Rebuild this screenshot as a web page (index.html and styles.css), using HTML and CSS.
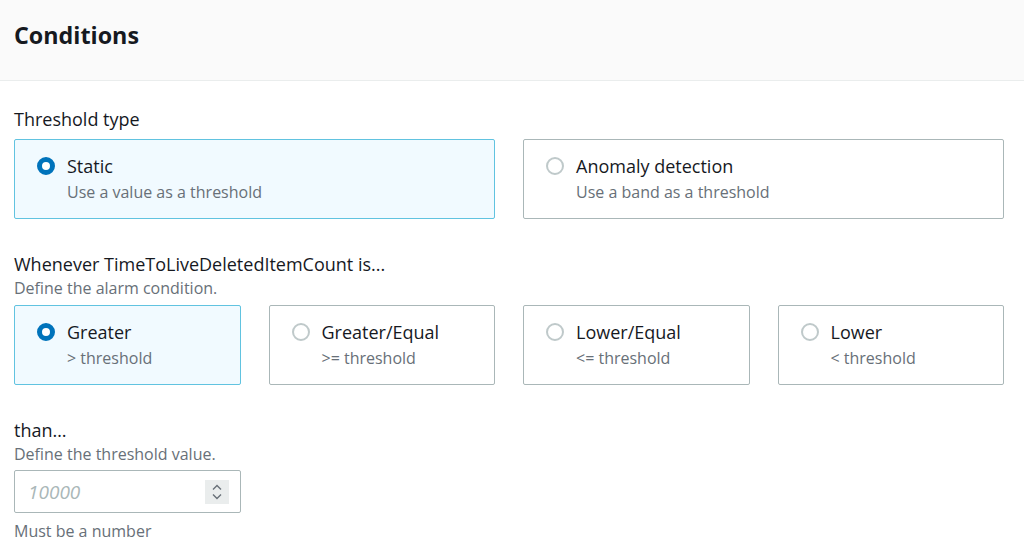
FILE: index.html
```html
<!DOCTYPE html>
<html>
<head>
<meta charset="utf-8">
<link rel="stylesheet" href="styles.css">
</head>
<body>
<div class="panel">
  <header class="head"><h2 class="title">Conditions</h2></header>
  <div class="body">
    <div class="field">
      <div class="label">Threshold type</div>
      <div class="tiles two">
        <div class="tile selected">
          <div class="tile-top"><span class="radio on"></span><span class="tile-label">Static</span></div>
          <div class="tile-desc">Use a value as a threshold</div>
        </div>
        <div class="tile">
          <div class="tile-top"><span class="radio"></span><span class="tile-label">Anomaly detection</span></div>
          <div class="tile-desc">Use a band as a threshold</div>
        </div>
      </div>
    </div>
    <div class="field">
      <div class="label">Whenever TimeToLiveDeletedItemCount is...</div>
      <div class="hint">Define the alarm condition.</div>
      <div class="tiles four">
        <div class="tile selected">
          <div class="tile-top"><span class="radio on"></span><span class="tile-label">Greater</span></div>
          <div class="tile-desc">&gt; threshold</div>
        </div>
        <div class="tile">
          <div class="tile-top"><span class="radio"></span><span class="tile-label">Greater/Equal</span></div>
          <div class="tile-desc">&gt;= threshold</div>
        </div>
        <div class="tile">
          <div class="tile-top"><span class="radio"></span><span class="tile-label">Lower/Equal</span></div>
          <div class="tile-desc">&lt;= threshold</div>
        </div>
        <div class="tile">
          <div class="tile-top"><span class="radio"></span><span class="tile-label">Lower</span></div>
          <div class="tile-desc">&lt; threshold</div>
        </div>
      </div>
    </div>
    <div class="field last">
      <div class="label">than…</div>
      <div class="hint">Define the threshold value.</div>
      <div class="input">
        <span class="placeholder">10000</span>
        <span class="spinner">
          <svg width="12" height="18" viewBox="0 0 12 18"><path d="M2 6.5 L6 2.5 L10 6.5 M2 11.5 L6 15.5 L10 11.5" fill="none" stroke="#687078" stroke-width="1.4"/></svg>
        </span>
      </div>
      <div class="constraint">Must be a number</div>
    </div>
  </div>
</div>
</body>
</html>
```
FILE: styles.css
```css
* { box-sizing: border-box; }
html, body { margin: 0; padding: 0; background: #fff; }
body { font-family: "Open Sans", "Noto Sans", sans-serif; color: #16191f; width: 1024px; height: 541px; overflow: hidden; }
.head { background: #fafafa; border-bottom: 1px solid #eaeded; height: 81px; padding: 0 14px; display: flex; align-items: center; }
.title { margin: 0; font-size: 23.3px; font-weight: 700; margin-top: -10px; }
.body { padding: 26px 20px 0 14px; }
.field { margin-bottom: 33px; }
.field.last { margin-bottom: 0; }
.label { font-size: 18px; line-height: 24px; }
.hint { font-size: 16px; line-height: 22px; color: #687078; margin-top: 1px; }
.tiles { display: grid; gap: 28px; margin-top: 8px; }
.two { grid-template-columns: 1fr 1fr; }
.four { grid-template-columns: repeat(4, 1fr); margin-top: 6px; }
.tile { border: 1px solid #aab7b8; border-radius: 2px; height: 80px; padding: 14px 22px; background: #fff; }
.tile.selected { border-color: #61c3e0; background: #f1faff; }
.tile-top { display: flex; align-items: center; gap: 12px; height: 24px; }
.radio { width: 18px; height: 18px; border-radius: 50%; border: 2px solid #aab7b8; flex: none; opacity: 0.75; }
.radio.on { border: 5px solid #0073bb; background: #fff; opacity: 1; }
.tile-label { font-size: 18px; line-height: 24px; }
.tile-desc { font-size: 16px; line-height: 22px; color: #687078; padding-left: 30px; margin-top: 3px; }
.input { margin-top: 5px; width: 227px; height: 43px; border: 1px solid #aab7b8; border-radius: 2px; display: flex; align-items: center; justify-content: space-between; padding: 0 11px 0 13px; }
.placeholder { font-style: italic; color: #aab7b8; font-size: 19px; }
.spinner { width: 24px; height: 24px; background: #eaeded; display: flex; align-items: center; justify-content: center; }
.constraint { font-size: 16px; line-height: 22px; color: #687078; margin-top: 7px; }
```
